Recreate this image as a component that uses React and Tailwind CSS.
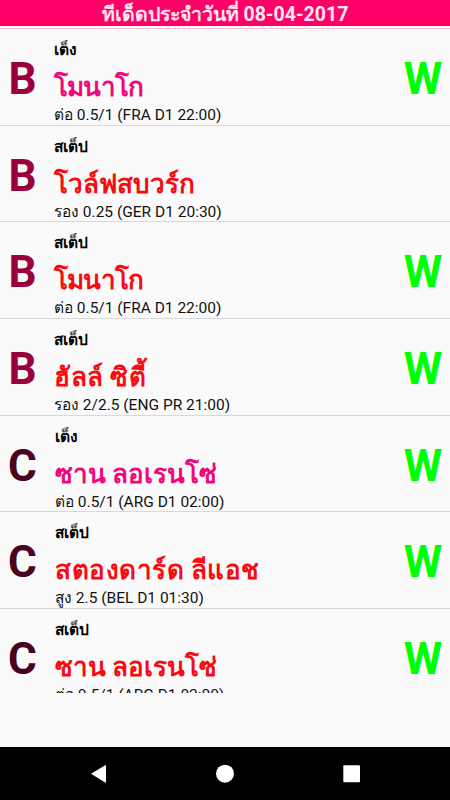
const tips = [
  { grade: 'B', type: 'เต็ง', team: 'โมนาโก', detail: 'ต่อ 0.5/1 (FRA D1 22:00)', result: 'W', tracking: 'tracking-[-0.8px]' },
  { grade: 'B', type: 'สเต็ป', team: 'โวล์ฟสบวร์ก', detail: 'รอง 0.25 (GER D1 20:30)', result: '', tracking: 'tracking-normal' },
  { grade: 'B', type: 'สเต็ป', team: 'โมนาโก', detail: 'ต่อ 0.5/1 (FRA D1 22:00)', result: 'W', tracking: 'tracking-[-0.8px]' },
  { grade: 'B', type: 'สเต็ป', team: 'ฮัลล์ ซิตี้', detail: 'รอง 2/2.5 (ENG PR 21:00)', result: 'W', tracking: 'tracking-[0.5px]' },
  { grade: 'C', type: 'เต็ง', team: 'ซาน ลอเรนโซ่', detail: 'ต่อ 0.5/1 (ARG D1 02:00)', result: 'W', tracking: 'tracking-normal' },
  { grade: 'C', type: 'สเต็ป', team: 'สตองดาร์ด ลีแอช', detail: 'สูง 2.5 (BEL D1 01:30)', result: 'W', tracking: 'tracking-[0.5px]' },
  { grade: 'C', type: 'สเต็ป', team: 'ซาน ลอเรนโซ่', detail: 'ต่อ 0.5/1 (ARG D1 02:00)', result: 'W', tracking: 'tracking-normal' },
];

function TipRow({ tip }) {
  return (
    <li className="flex h-[96.7px] shrink-0 items-center border-b border-[#d9d9d9] whitespace-nowrap">
      <span
        className={`w-[45px] pt-1 text-center text-[44px] leading-none font-bold ${
          tip.grade === 'B' ? 'text-[#99003d]' : 'text-[#4a0020]'
        }`}
      >
        {tip.grade}
      </span>
      <div className={`flex-1 pt-2 ${tip.grade === 'B' ? 'ml-[9px]' : 'ml-[10px]'}`}>
        <p className="h-[27px] text-[15.5px] leading-[25px] font-bold text-black">{tip.type}</p>
        <h2
          className={`h-[39px] text-[26px] leading-[44px] font-bold ${tip.tracking} ${
            tip.type === 'เต็ง' ? 'text-[#f0087a]' : 'text-[#f90a10]'
          }`}
        >
          {tip.team}
        </h2>
        <p className="h-[20px] text-[15.5px] leading-[22px] text-[#111]">{tip.detail}</p>
      </div>
      <span className="w-[54px] pt-1 text-center text-[44px] leading-none font-bold text-[#00ff00]">
        {tip.result}
      </span>
    </li>
  );
}

export default function App() {
  return (
    <div className="flex h-[800px] w-[450px] flex-col overflow-hidden bg-[#fafafa] font-['Roboto',sans-serif]">
      <header className="h-[26px] shrink-0 bg-[#ff0066] text-center text-[19.5px] leading-[29px] font-bold whitespace-nowrap text-[#ffe6f0]">
        ทีเด็ดประจำวันที่ 08-04-2017
      </header>
      <div className="mt-[2px] h-px shrink-0 bg-[#ffc4dc]" />

      <ul className="flex h-[664px] shrink-0 flex-col overflow-hidden">
        {tips.map((tip, i) => (
          <TipRow key={i} tip={tip} />
        ))}
      </ul>

      {/* Android navigation bar */}
      <nav className="mt-auto h-[53px] shrink-0 bg-black">
        <svg className="block h-full w-full" viewBox="0 0 450 53" fill="#fff">
          <path d="M91 26.8 105.2 18.2Q106 17.8 106 18.7V34.9Q106 35.8 105.2 35.4Z" />
          <circle cx="225" cy="26.7" r="9" />
          <rect x="343.3" y="18.3" width="16.7" height="17" rx="1" />
        </svg>
      </nav>
    </div>
  );
}
